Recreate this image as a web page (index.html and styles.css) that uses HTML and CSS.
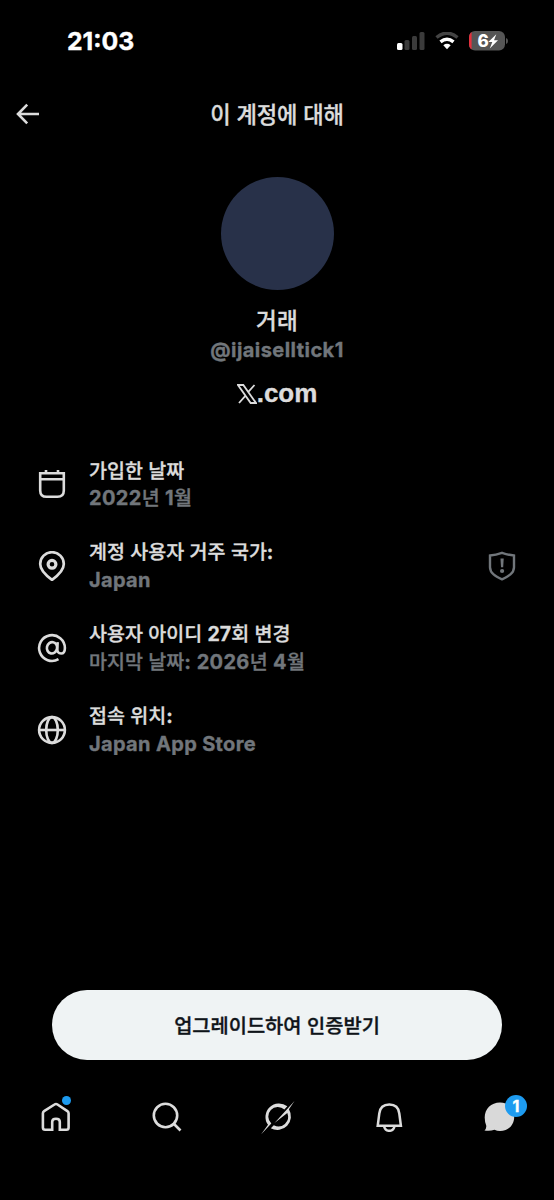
FILE: index.html
```html
<!DOCTYPE html>
<html lang="ko">
<head>
<meta charset="utf-8">
<meta name="viewport" content="width=device-width">
<title>이 계정에 대해</title>
<link rel="stylesheet" href="styles.css">
</head>
<body>
<div class="screen">
  <header class="status">
    <span class="time">21:03</span>
    <div class="indicators">
      <svg class="signal" width="28" height="18" viewBox="0 0 28 18"><rect x="0" y="11" width="5.500" height="7" rx="1.500" fill="#fff"/><g fill="#3b3b3b"><rect x="7.500" y="8" width="5" height="10" rx="1.500"/><rect x="15" y="4" width="5" height="14" rx="1.500"/><rect x="22.500" y="0" width="5" height="18" rx="1.500"/></g></svg>
      <svg class="wifi" width="24" height="18" viewBox="0 0 24 18" fill="none"><path d="M1.500 5.500Q12-3 22.500 5.500" stroke="#444" stroke-width="3.500"/><path d="M5.500 9.800Q12 4.700 18.500 9.800" stroke="#fff" stroke-width="3.500"/><path d="M8.300 13.200Q12 10.300 15.700 13.200L12 17.200Z" fill="#fff"/></svg>
      <svg class="battery" width="39" height="20" viewBox="0 0 39 20"><defs><clipPath id="cell"><rect width="36" height="19.500" rx="6"/></clipPath></defs><g clip-path="url(#cell)"><rect width="36" height="20" fill="#555"/><rect width="2.600" height="20" fill="#e5303d"/></g><path d="M37 7q2 .5 2 3t-2 3z" fill="#555"/><text class="battery-text" x="8.500" y="16">6</text><path d="M27.300 3.200 19.300 11h4l-2.500 6.500L29 9.300h-4z" fill="#fff"/></svg>
    </div>
  </header>
  <nav class="titlebar">
    <svg class="back" width="24" height="22" viewBox="0 0 24 22" fill="none" stroke="#dcdcdc" stroke-width="2.600"><path d="M11.200 1.700 2 11l9.200 9.300M2.300 11H23"/></svg>
    <h1 class="title">이 계정에 대해</h1>
  </nav>
  <section class="profile">
    <div class="avatar"></div>
    <div class="name">거래</div>
    <div class="handle">@ijaiselltick1</div>
    <div class="brand"><svg width="20" height="20" viewBox="0 0 20 20"><path d="M1 1h5.300l12.700 18h-5.300zM17.500 1l-6.800 7.600M9 11.200 2 19" fill="none" stroke="#dcdcdc" stroke-width="1.800"/></svg><span class="brand-text">.com</span></div>
  </section>
  <main class="facts">
    <div class="fact">
      <svg class="icon" width="30" height="30" viewBox="0 0 30 30" fill="none" stroke="#dcdcdc" stroke-width="2.600"><path d="M3.200 4.200h23.600v17.300q0 6.300-6.300 6.300h-11q-6.300 0-6.300-6.300zM3 10.200h24M9 1v4M21 1v4"/></svg>
      <div class="copy"><div class="label">가입한 날짜</div><div class="value"><b>2022</b>년 <b>1</b>월</div></div>
    </div>
    <div class="fact">
      <svg class="icon" width="30" height="30" viewBox="0 0 30 30" fill="none" stroke="#dcdcdc"><path d="M15 28.800C9 24.500 3.200 19.500 3.200 13a11.800 11.800 0 0 1 23.600 0c0 6.500-5.800 11.500-11.800 15.800z" stroke-width="2.700"/><circle cx="15" cy="13.300" r="3.900" stroke-width="3.200"/></svg>
      <div class="copy"><div class="label">계정 사용자 거주 국가<b>:</b></div><div class="value"><b>Japan</b></div></div>
      <svg class="shield" width="28" height="30" viewBox="0 0 28 30"><path d="M2 4.500Q8 4 14 1.800q6 2.200 12 2.700v11.800c0 6-5.500 9-12 12-6.500-3-12-6-12-12z" fill="none" stroke="#71767b" stroke-width="2.400"/><path d="M12.500 7.500h3.200l-.5 8.800h-2.200z" fill="#71767b"/><circle cx="14.100" cy="20" r="2.100" fill="#71767b"/></svg>
    </div>
    <div class="fact">
      <svg class="icon" width="30" height="30" viewBox="0 0 30 30" fill="none" stroke="#dcdcdc" stroke-width="2.600"><path d="M21.500 26.200A12.900 12.900 0 1 1 27.900 15c0 3.200-1.200 5.500-3.800 5.500-2.700 0-4-1.800-3.800-5l.4-6.300"/><ellipse cx="15" cy="14.800" rx="5.100" ry="5.700" transform="rotate(12 15 14.800)"/></svg>
      <div class="copy"><div class="label">사용자 아이디 <b>27</b>회 변경</div><div class="value">마지막 날짜<b>:</b> <b>2026</b>년 <b>4</b>월</div></div>
    </div>
    <div class="fact">
      <svg class="icon" width="30" height="30" viewBox="0 0 30 30" fill="none" stroke="#dcdcdc" stroke-width="2.600"><circle cx="15" cy="15" r="12.900"/><ellipse cx="15" cy="15" rx="5.800" ry="12.900"/><path d="M2 15h26"/></svg>
      <div class="copy"><div class="label">접속 위치<b>:</b></div><div class="value"><b>Japan App Store</b></div></div>
    </div>
  </main>
  <button class="upgrade">업그레이드하여 인증받기</button>
  <footer class="tabs">
    <div class="tab"><svg width="32" height="32" viewBox="0 0 32 32" fill="none" stroke="#dcdcdc" stroke-width="2.600"><path d="M2.900 13.300q0-1.400 1.200-2.200l10.400-6.600q1.500-1 3 0l9.900 6.600q1.200.8 1.200 2.200v14.200q0 2.200-2.200 2.200h-6.600v-8q0-3-3.800-3t-3.800 3v8H5.100q-2.200 0-2.200-2.200z"/></svg><i class="dot"></i></div>
    <div class="tab"><svg width="32" height="32" viewBox="0 0 32 32" fill="none" stroke="#dcdcdc" stroke-width="2.600"><circle cx="14.500" cy="15.500" r="11.700"/><path d="m22.500 23.500 7 7"/></svg></div>
    <div class="tab grok"><svg width="36" height="36" viewBox="0 0 36 36"><path d="M27.300 7.300A13.500 13.500 0 0 0 8 25.800L1 35.500 11.300 24.500A9.500 9.500 0 0 1 24.400 10.500zM34.500 2l-5.600 8.300A13.500 13.500 0 0 1 10.800 29.200l3-2.900A9.700 9.700 0 0 0 27.300 14L14.500 24z" fill="#dcdcdc"/></svg></div>
    <div class="tab"><svg width="30" height="32" viewBox="0 0 30 32" fill="none" stroke="#dcdcdc" stroke-width="2.500"><path d="M3.700 25.800 5.300 13.500Q6.300 4.500 15.300 4.500t10 9l1.600 12.300zM10.100 26.500q1.200 4.300 5.200 4.300t5.200-4.300"/></svg></div>
    <div class="tab"><svg width="32" height="32" viewBox="0 0 32 32"><path d="M16 2.500c8.500 0 14.200 6 14.200 14.300S24.500 31 16 31q-3 0-5.500-1.200Q5.800 31.500.5 30.500q2.200-2.500 1.700-5Q.7 21.500.7 17.500C.7 9 7 2.500 16 2.500z" fill="#d9d9d9"/></svg><span class="badge">1</span></div>
  </footer>
</div>
</body>
</html>
```
FILE: styles.css
```css
* { box-sizing: border-box; }
body { margin: 0; background: #000; }
.screen {
  width: 554px; height: 1200px; background: #000; color: #dcdcdc; overflow: hidden;
  display: flex; flex-direction: column;
  font-family: "Noto Sans CJK KR", sans-serif; font-weight: 500;
  -webkit-text-stroke: .35px currentColor;
}
svg { display: block; flex: none; }
b { font-family: Inter, sans-serif; font-weight: 700; }
.status { height: 82px; display: flex; justify-content: space-between; align-items: center; padding: 0 46px 0 67px; }
.time { font: 700 24.8px/30px Inter, sans-serif; color: #fff; }
.indicators { display: flex; align-items: center; gap: 10px; -webkit-text-stroke: 0; }
.battery-text { font: 800 17px Inter, sans-serif; fill: #fff; }
.titlebar { height: 64px; display: grid; grid-template-columns: 60px 1fr 60px; align-items: center; }
.back { margin-left: 16px; }
.title { margin: 0 0 3px; text-align: center; font-size: 22.2px; font-weight: 500; line-height: 30px; letter-spacing: -.2px; }
.profile { height: 304px; padding-top: 31px; display: flex; flex-direction: column; align-items: center; }
.avatar { width: 113px; height: 113px; border-radius: 50%; background: #283149; flex: none; }
.name { margin-top: 14px; font-size: 22.500px; line-height: 30px; letter-spacing: .3px; }
.handle { margin-top: 2px; font: 700 20px/28px Inter, sans-serif; letter-spacing: .45px; color: #71767b; }
.brand { margin-top: 14px; height: 32px; display: flex; align-items: center; }
.brand-text { font: 700 26px/30px "Liberation Sans", sans-serif; margin-bottom: 2px; }
.facts { height: 540px; display: flex; flex-direction: column; gap: 26px; padding: 6px 38px 0 37px; }
.fact { height: 56px; display: flex; align-items: center; }
.copy { flex: 1; margin-left: 22px; }
.label, .value { font-size: 19.500px; line-height: 28px; white-space: nowrap; }
.value { color: #71767b; margin-top: -1px; margin-bottom: 1px; }
.value b { font-size: 20px; letter-spacing: .34px; }
.upgrade {
  flex: none; width: 450px; height: 70px; margin: 0 0 0 52px; padding: 0 0 1px; border: 0; border-radius: 35px;
  background: #eff3f4; color: #0f1419; font: 500 19.8px/28px "Noto Sans CJK KR", sans-serif;
  -webkit-text-stroke: .35px currentColor;
}
.tabs { height: 112px; display: grid; grid-template-columns: repeat(5, 111px); }
.tab { position: relative; display: flex; justify-content: center; align-items: center; }
.grok { padding-top: 2px; }
.dot { position: absolute; left: 62px; top: 36px; width: 9px; height: 9px; border-radius: 50%; background: #1d9bf0; }
.badge {
  position: absolute; left: 61px; top: 35px; width: 22px; height: 22px; border-radius: 50%;
  background: #1d9bf0; color: #fff; font: 700 16px/22px Inter, sans-serif; text-align: center;
}
```
